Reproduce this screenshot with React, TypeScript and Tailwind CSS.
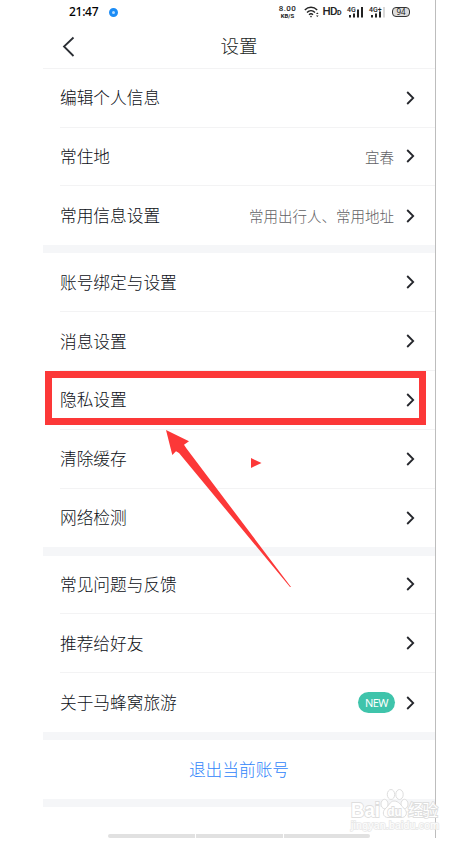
import React from 'react';

interface SettingItem {
  name: string;
  value?: string;
  isNew?: boolean;
}

const settingGroups: SettingItem[][] = [
  [
    { name: '编辑个人信息' },
    { name: '常住地', value: '宜春' },
    { name: '常用信息设置', value: '常用出行人、常用地址' },
  ],
  [
    { name: '账号绑定与设置' },
    { name: '消息设置' },
    { name: '隐私设置' },
    { name: '清除缓存' },
    { name: '网络检测' },
  ],
  [
    { name: '常见问题与反馈' },
    { name: '推荐给好友' },
    { name: '关于马蜂窝旅游', isNew: true },
  ],
];

const Signal: React.FC<{ label: string; weak?: boolean }> = ({ label, weak }) => (
  <svg className="overflow-visible" width="17" height="12" viewBox="0 0 17 12" fill="#222">
    <text x="0" y="6" fontSize="7" fontWeight="500" fontFamily="Roboto, sans-serif">{label}</text>
    <rect x="2" y="9" width="2" height="2.5" />
    <rect x="6" y="7.5" width="2" height="4" />
    <rect x="10" y={weak ? 5.5 : 3.5} width="2" height={weak ? 6 : 8} />
    <rect x="14" y="1" width="2" height="10.5" fill={weak ? '#d8d8d8' : '#222'} />
  </svg>
);

const StatusBar = () => (
  <div className="flex h-6 items-center pl-[26px] pr-[25px] font-['Noto_Sans',sans-serif] text-[#222]">
    <span className="w-[30px] text-[12px] font-medium leading-none tracking-[-0.3px] text-black">21:47</span>
    <span className="ml-[10px] h-[9px] w-[9px] rounded-full border-[3px] border-[#1c8cf5] bg-[#b5dcff]" />
    <div className="ml-auto flex items-center">
      <div className="flex w-[19px] flex-col items-center font-[Roboto,sans-serif] font-medium">
        <span className="block h-[8px] text-[8px] leading-[8px] tracking-[0.4px]">8.00</span>
        <span className="block h-[6px] text-[6px] font-bold leading-[6px]">KB/S</span>
      </div>
      <svg className="ml-[6.5px]" width="16" height="12" viewBox="0 0 16 12" fill="none" stroke="#222" strokeWidth="1.4">
        <path d="M.8 4C4.4.4 9.6.4 13.2 4M3 6.4c2.3-2.3 5.7-2.3 8 0M5 8.7c1.3-1.2 2.7-1.2 4 0" />
        <circle cx="7" cy="10.6" r=".8" fill="#222" stroke="none" />
        <path d="M12 8l1.3-1.5L14.6 8zM12 9.5l1.3 1.5 1.3-1.5z" fill="#222" stroke="none" />
      </svg>
      <span className="ml-[3px] flex w-[19px] items-baseline whitespace-nowrap font-[Roboto,sans-serif] text-[11.5px] font-medium leading-none tracking-[-0.6px]">
        HD<b className="text-[7px]">D</b>
      </span>
      <span className="ml-[5.5px]"><Signal label="4G" /></span>
      <span className="ml-[5px]"><Signal label="4G+" weak /></span>
      <span className="ml-[6px] flex h-[10px] w-[18px] items-center justify-center rounded-[4px] border border-[#333] bg-[#ddd] text-[8px] leading-none">
        94
      </span>
    </div>
  </div>
);

const Chevron = () => (
  <svg width="9" height="14" viewBox="0 0 9 14" fill="none" stroke="#25272c" strokeWidth="1.8">
    <path d="M1.2 1l6 6-6 6" />
  </svg>
);

const SettingRow: React.FC<{ item: SettingItem; last: boolean }> = ({ item, last }) => (
  <div className={`ml-[17px] flex h-[58.8px] items-center pr-[20px] ${last ? '' : 'border-b border-[#f3f3f4]'}`}>
    <span className="text-[16.7px] font-light text-[#0c0f16]">{item.name}</span>
    <div className="ml-auto flex items-center">
      {item.value && <span className="mr-[12px] text-[14.5px] font-light text-[#5f6164]">{item.value}</span>}
      {item.isNew && (
        <span className="mr-[11px] flex h-[21px] w-[37px] items-center justify-center rounded-full bg-[#3fc4ab] font-['Noto_Sans',sans-serif] text-[11px] leading-none tracking-[-0.5px] text-white">
          NEW
        </span>
      )}
      <Chevron />
    </div>
  </div>
);

const Divider = () => <div className="h-[8.2px] bg-[#f5f6f8]" />;

const Watermark = () => (
  <svg
    className="absolute left-[349px] top-[786px]"
    width="92"
    height="48"
    viewBox="0 0 92 48"
    fill="#fff"
    stroke="#dedede"
    strokeWidth="1"
    fontFamily="'Liberation Sans', 'Noto Sans CJK SC', sans-serif"
  >
    <ellipse cx="35.5" cy="18" rx="3.5" ry="4.7" />
    <ellipse cx="42" cy="8.5" rx="3.7" ry="5" />
    <ellipse cx="50.5" cy="8.5" rx="3.7" ry="5" />
    <ellipse cx="55.5" cy="18" rx="3.5" ry="4.7" />
    <path d="M45 15c-4 0-5 5-9 8-3 3-2 8.500 3 8.500h13c5 .5 7-5 4-8-4-4-6-8.500-11-8.500z" />
    <g style={{ paintOrder: 'stroke' }} strokeWidth="1.8" fontWeight="700">
      <text x="2" y="31" fontSize="20" textLength="29" lengthAdjust="spacingAndGlyphs">Bai</text>
      <text x="38.5" y="29.5" fontSize="12.5" textLength="14" lengthAdjust="spacingAndGlyphs">du</text>
      <text x="59" y="30" fontSize="15.5" textLength="30" fontWeight="400">经验</text>
    </g>
    <text
      x="2"
      y="43"
      fontSize="10.5"
      strokeWidth="1.6"
      stroke="#e8e8e8"
      textLength="88"
      style={{ paintOrder: 'stroke' }}
    >
      jingyan.baidu.com
    </text>
  </svg>
);

export default function App() {
  return (
    <div className="relative h-[843px] w-[468px] overflow-hidden bg-white font-['Noto_Sans_CJK_SC',sans-serif]">
      <main className="ml-[43px] h-[838px] w-[393px] border-r border-[#bdbdbd] bg-white">
        <StatusBar />
        <header className="relative flex h-[44.8px] items-center justify-center border-b border-[#f3f3f4]">
          <svg className="absolute left-[19px] top-[12px]" width="13" height="21" viewBox="0 0 13 21" fill="none" stroke="#2b2e34" strokeWidth="1.8">
            <path d="M11.5 1.5L2 10.5l9.5 9.5" />
          </svg>
          <h1 className="text-[18.5px] font-light text-[#1c1f25]">设置</h1>
        </header>

        {settingGroups.map((group, i) => (
          <React.Fragment key={i}>
            <section>
              {group.map((item, j) => (
                <SettingRow key={item.name} item={item} last={j === group.length - 1} />
              ))}
            </section>
            <Divider />
          </React.Fragment>
        ))}

        <button className="flex h-[58.8px] w-full items-center justify-center text-[16.7px] font-light text-[#2f84fa]">
          退出当前账号
        </button>
        <Divider />

        {/* Home gesture bar */}
        <div className="ml-[65px] mt-[26.8px] flex h-[4px] w-[262px] gap-px overflow-hidden rounded-full">
          <div className="w-[87px] bg-[#e1e1e1]" />
          <div className="w-[87px] bg-[#e1e1e1]" />
          <div className="flex-1 bg-[#e1e1e1]" />
        </div>
      </main>

      {/* Highlight around the privacy row */}
      <div className="absolute left-[45px] top-[371px] h-[54px] w-[381px] border-[7px] border-[#fc3838]" />
      <svg className="absolute left-[160px] top-[425px]" width="135" height="170" viewBox="160 425 135 170" fill="#fc3838">
        <path d="M166 430L189 441.3L184 444.7L186.500 448.500L291 587L290 587L179 453L176 451.300L172.300 455z" />
        <path d="M251 458l10.5 5-10.5 5z" />
      </svg>
      <Watermark />
    </div>
  );
}
